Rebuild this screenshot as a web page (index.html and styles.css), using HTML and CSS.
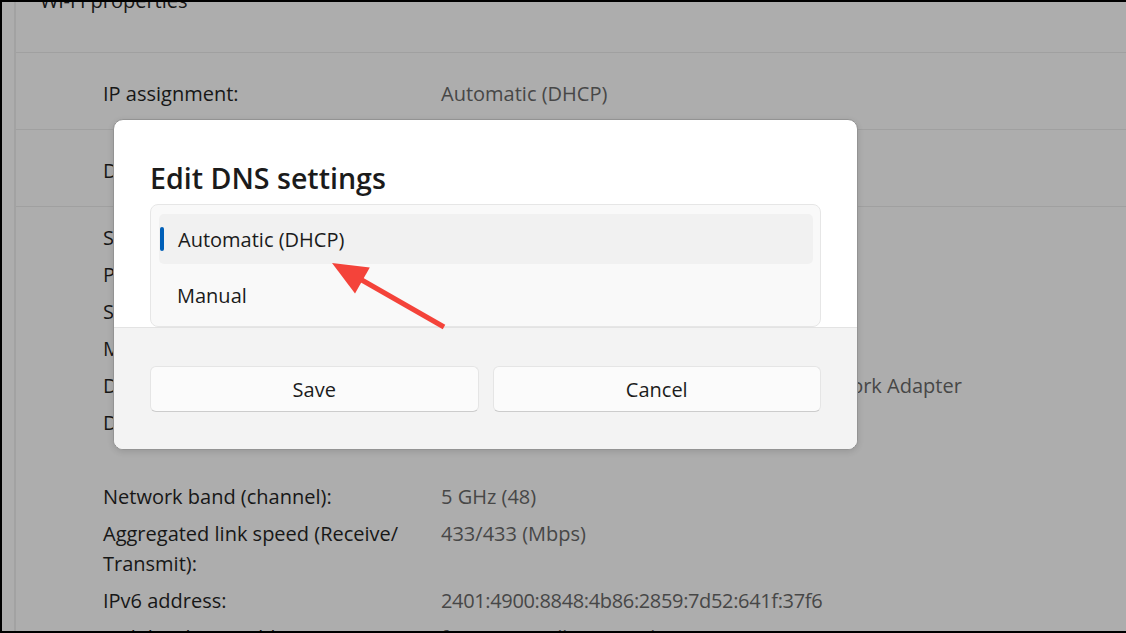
FILE: index.html
```html
<!DOCTYPE html>
<html lang="en">

<head>
    <meta charset="UTF-8">
    <meta name="viewport" content="width=device-width, initial-scale=1.0">
    <title>Wi-Fi properties - Edit DNS settings</title>
    <link rel="stylesheet" href="styles.css">
</head>

<body>
    <div class="frame">
        <div class="rail"></div>

        <main class="page">
            <div class="page-head">Wi-Fi properties</div>

            <div class="setting-row">
                <span class="label">IP assignment:</span>
                <span class="value">Automatic (DHCP)</span>
            </div>
            <div class="setting-row">
                <span class="label">DNS server assignment:</span>
                <span class="value">Automatic (DHCP)</span>
            </div>

            <dl class="props">
                <dt>SSID:</dt>
                <dd>Airtel_5G</dd>
                <dt>Protocol:</dt>
                <dd>Wi-Fi 5 (802.11ac)</dd>
                <dt>Security type:</dt>
                <dd>WPA2-Personal</dd>
                <dt>Manufacturer:</dt>
                <dd>Qualcomm Communications Inc.</dd>
                <dt>Description:</dt>
                <dd>Qualcomm Atheros QCA9377 Wireless Network Adapter</dd>
                <dt>Driver version:</dt>
                <dd>12.0.0.832</dd>
            </dl>

            <dl class="props props-more">
                <dt>Network band (channel):</dt>
                <dd>5 GHz (48)</dd>
                <dt>Aggregated link speed (Receive/<wbr>Transmit):</dt>
                <dd>433/433 (Mbps)</dd>
                <dt>IPv6 address:</dt>
                <dd class="addr">2401:4900:8848:4b86:2859:7d52:641f:37f6</dd>
                <dt>Link-local IPv6 address:</dt>
                <dd class="addr">fe80::21a0:9db:262:964b:994%5</dd>
            </dl>
        </main>

        <div class="dialog">
            <div class="dialog-body">
                <h2>Edit DNS settings</h2>
                <ul class="choice-list">
                    <li class="choice selected">Automatic (DHCP)</li>
                    <li class="choice">Manual</li>
                </ul>
            </div>
            <div class="dialog-footer">
                <button class="btn">Save</button>
                <button class="btn">Cancel</button>
            </div>
        </div>

        <!-- red callout arrow pointing at the selected option -->
        <svg class="callout" width="130" height="85" viewBox="0 0 130 85">
            <line x1="124" y1="77" x2="40" y2="29" stroke="#f4433a" stroke-width="5" />
            <polygon points="12,13 49.8,17.4 35,43.4" fill="#f4433a" />
        </svg>
    </div>
</body>

</html>
```

FILE: styles.css
```css
* {
    margin: 0;
    padding: 0;
    box-sizing: border-box;
}

body {
    font-family: 'Open Sans', 'Noto Sans', sans-serif;
    background-color: #adadad;
}

.frame {
    position: relative;
    width: 1126px;
    height: 633px;
    display: flex;
    overflow: hidden;
    background-color: #adadad;
    border-left: 2px solid #000;
    border-top: 2px solid #000;
    border-bottom: 2px solid #000;
}

.rail {
    width: 14px;
    flex-shrink: 0;
    border-right: 2px solid #a2a2a2;
}

.page {
    flex: 1;
    font-size: 20px;
    line-height: 30px;
    color: #171717;
}

/* title is scrolled mostly out of view */
.page-head {
    height: 67px;
    margin-top: -16px;
    padding-left: 24px;
    border-bottom: 1px solid #a0a0a0;
}

.setting-row {
    display: grid;
    grid-template-columns: 338px auto;
    height: 77px;
    padding: 26px 0 0 87px;
    border-bottom: 1px solid #a0a0a0;
}

.value,
.props dd {
    color: #474747;
}

.props {
    display: grid;
    grid-template-columns: 338px auto;
    row-gap: 7px;
    padding: 16px 0 0 87px;
}

.props dt {
    padding-right: 30px;
}

.props dd {
    white-space: nowrap;
}

.props .addr {
    letter-spacing: -0.35px;
}

.props-more {
    padding-top: 44px;
}

/* dialog */
.dialog {
    position: absolute;
    left: 111px;
    top: 117px;
    width: 745px;
    background-color: #ffffff;
    border: 1px solid #939393;
    border-radius: 10px;
    overflow: hidden;
    color: #1b1b1b;
    box-shadow: 0 2px 6px rgba(0, 0, 0, 0.12);
}

.dialog-body {
    padding: 40px 36px 0 36px;
}

.dialog-body h2 {
    font-size: 28.6px;
    font-weight: 600;
    line-height: 36px;
    margin-bottom: 8px;
}

.choice-list {
    list-style: none;
    background-color: #f9f9f9;
    border: 1px solid #e6e6e6;
    border-radius: 8px;
    padding: 9px 7px 6px 8px;
    display: flex;
    flex-direction: column;
    gap: 6px;
}

.choice {
    height: 50px;
    display: flex;
    align-items: center;
    padding-left: 18px;
    font-size: 20px;
    border-radius: 5px;
}

.choice.selected {
    background-color: #f1f1f1;
    padding-left: 0;
}

.choice.selected::before {
    content: "";
    width: 4px;
    height: 24px;
    margin: 0 14px 0 1px;
    border-radius: 2px;
    background-color: #005fb8;
}

.dialog-footer {
    display: grid;
    grid-template-columns: 1fr 1fr;
    gap: 14px;
    padding: 38px 36px 37px;
    background-color: #f3f3f3;
    border-top: 1px solid #e3e3e3;
}

.btn {
    height: 46px;
    font-family: inherit;
    font-size: 20px;
    line-height: 46px;
    color: #1b1b1b;
    background-color: #fbfbfb;
    border: 1px solid #e5e5e5;
    border-bottom-color: #cccccc;
    border-radius: 6px;
}

.callout {
    position: absolute;
    left: 318px;
    top: 248px;
}
```
